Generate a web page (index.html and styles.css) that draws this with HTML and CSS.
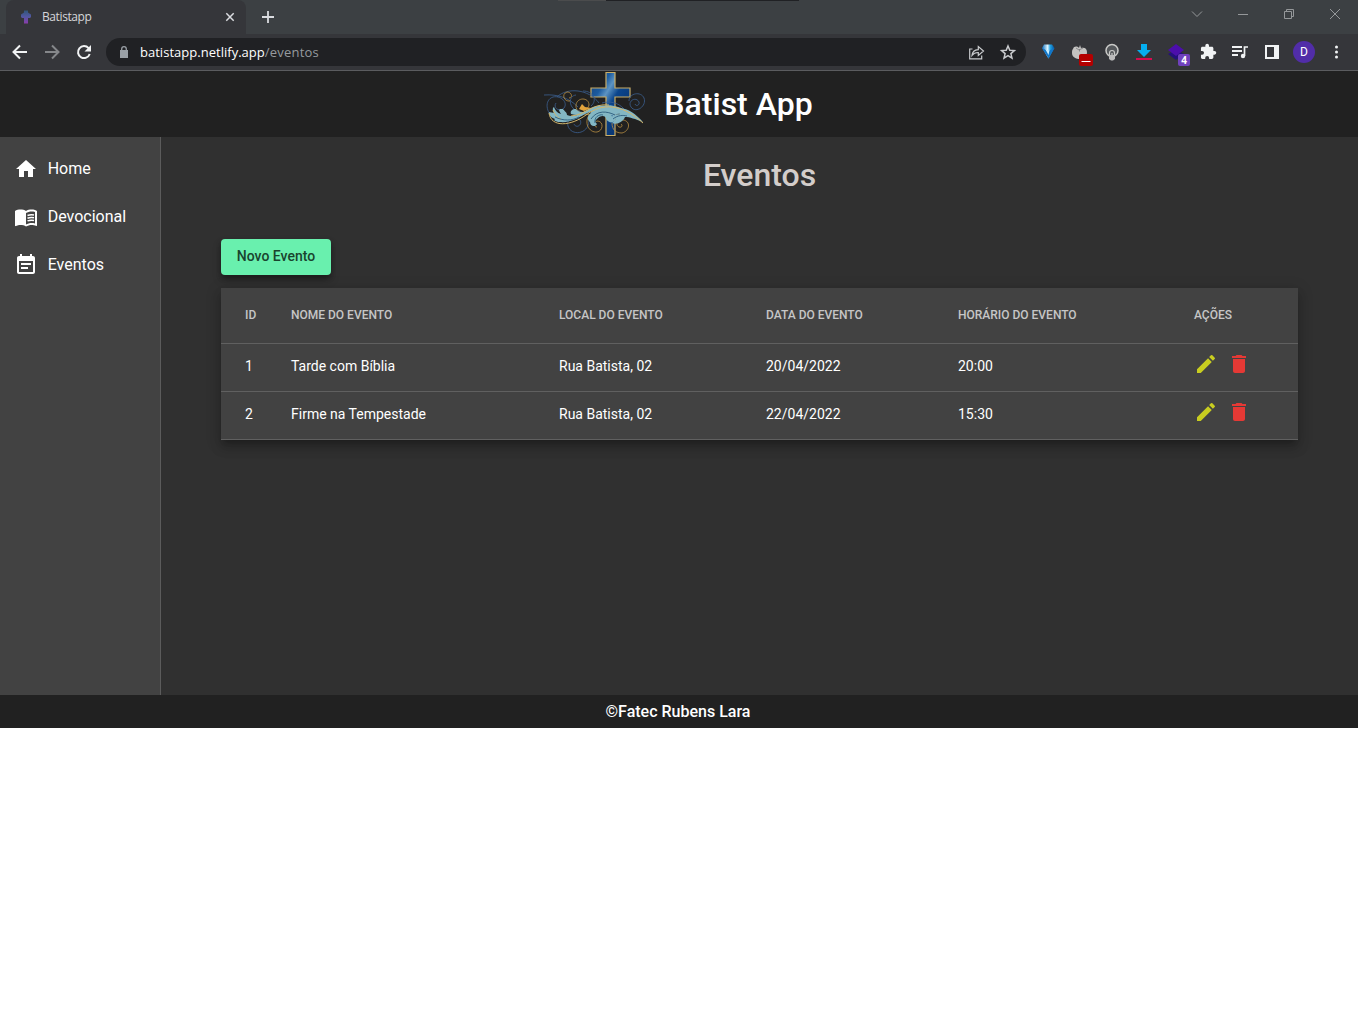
FILE: index.html
```html
<!DOCTYPE html>
<html lang="pt-BR">
<head>
<meta charset="utf-8">
<title>Batistapp</title>
<link rel="stylesheet" href="styles.css">
</head>
<body>
<svg class="sprite" width="0" height="0">
  <symbol id="edit" viewBox="0 0 24 24"><path d="M3 17.25V21h3.75L17.81 9.94l-3.75-3.75L3 17.25zM20.71 7.04a1 1 0 0 0 0-1.41l-2.34-2.34a1 1 0 0 0-1.41 0l-1.83 1.83 3.75 3.75 1.83-1.83z"/></symbol>
  <symbol id="trash" viewBox="0 0 24 24"><path d="M6 19c0 1.1.9 2 2 2h8c1.1 0 2-.9 2-2V7H6v12zM19 4h-3.5l-1-1h-5l-1 1H5v2h14V4z"/></symbol>
</svg>
<div class="tabstrip">
  <div class="tab">
    <svg class="favicon" width="12" height="14" viewBox="0 0 12 14"><defs><linearGradient id="fav" x2="0" y2="1"><stop stop-color="#315578"/><stop offset=".45" stop-color="#5058a0"/><stop offset="1" stop-color="#8b3dab"/></linearGradient></defs><path fill="url(#fav)" d="M4 .5h4v2l3 2v2.500l-1 1H8v5.500H4V8H2L1 7V4.500l3-2z"/></svg>
    <span class="tab-title">Batistapp</span>
    <svg class="tab-close" width="10" height="10" viewBox="0 0 10 10"><path d="m1.300 1.300 7.400 7.400M8.700 1.300 1.300 8.700"/></svg>
  </div>
  <svg class="new-tab" width="14" height="14" viewBox="0 0 14 14"><path d="M7 1v12M1 7h12"/></svg>
  <div class="window-controls">
    <svg width="46" height="20" viewBox="0 0 46 20"><path d="m18 7.500 5 5 5-5"/></svg>
    <svg width="46" height="20" viewBox="0 0 46 20"><path d="M18 10.500h10"/></svg>
    <svg width="46" height="20" viewBox="0 0 46 20"><path d="M18.500 7.500h7v7h-7zM20.500 7.500v-2h7v7h-2"/></svg>
    <svg width="46" height="20" viewBox="0 0 46 20"><path d="m18 5 10 10M28 5 18 15"/></svg>
  </div>
</div>
<div class="toolbar">
  <div class="nav">
    <svg width="32" height="20" viewBox="0 0 32 20"><path class="line" d="M23 10H10M16 3.500 9.500 10l6.500 6.500"/></svg>
    <svg class="dim" width="32" height="20" viewBox="0 0 32 20"><path class="line" d="M9 10h13M16 3.500l6.500 6.500-6.500 6.500"/></svg>
    <svg width="32" height="20" viewBox="0 0 32 20"><path class="line" d="M20.600 6.200A6 6 0 1 0 21.700 12"/><path d="M23 3v6.500h-6.500z" fill="#f1f3f4"/></svg>
  </div>
  <div class="omnibox">
    <svg width="8" height="12" viewBox="0 0 8 12"><path fill="#9aa0a6" d="M0 4h8v8H0z"/><path d="M1.700 5V3a2.300 2.300 0 0 1 4.600 0v2" fill="none" stroke="#9aa0a6" stroke-width="1.300"/></svg>
    <span class="host">batistapp.netlify.app</span><span class="path">/eventos</span>
    <div class="omni-actions">
      <svg width="32" height="20" viewBox="0 0 32 20"><path d="M12.500 7H9.700v9.800h12v-3.300M12 13.500c.3-3.700 3-5.700 6.300-5.900V4.500L23.500 9l-5.200 4.500v-3c-3-.1-4.800.9-6.300 3z"/></svg>
      <svg width="32" height="20" viewBox="0 0 32 20"><path stroke-width="1.500" d="m16 4 1.800 4.200 4.600.4-3.500 3 1.100 4.500-4-2.400-4 2.400 1.100-4.500-3.500-3 4.600-.4z"/></svg>
    </div>
  </div>
  <div class="extensions">
    <svg width="32" height="24" viewBox="0 0 32 24"><defs><linearGradient id="gem"><stop stop-color="#0969b9"/><stop offset=".45" stop-color="#dff6ff"/><stop offset=".65" stop-color="#22a5e7"/><stop offset="1" stop-color="#074e96"/></linearGradient></defs><path fill="url(#gem)" d="M12 4.500h8l2.500 3.500-6 10.500L10 8z"/><path fill="#1276c8" d="m10 8 6 3 6.500-3-6 10.500z"/><path fill="#c9efff" d="m13.500 9.500 2.500 1 1.500-.5-1 5z"/></svg>
    <svg width="32" height="24" viewBox="0 0 32 24"><path fill="#c4c3c1" d="M9 9c1-3 4-3 6-1l1-3 1 3c3-1 6 0 6 4 0 5-3 7-7 7s-8-2-8-6c0-2 0-3 1-4z"/><path stroke="#77797b" stroke-width=".8" d="m12 8 3 2 4-2M15.500 9v2.500" fill="none"/><rect x="15" y="14" width="14" height="12" rx="2" fill="#b40000"/><path stroke="#fff" d="M17.500 21.500h9"/></svg>
    <svg width="32" height="24" viewBox="0 0 32 24"><circle cx="16" cy="10.500" r="6" fill="#55585b" stroke="#c9c9c7" stroke-width="1.500"/><path d="M13.500 17v-4a2.500 2.500 0 1 1 5 0v4M16 13v5" fill="none" stroke="#c9c9c7" stroke-width="1.200"/><path fill="#bbb" d="M13 15h6v4l-2 1.500h-2L13 19z"/></svg>
    <svg width="32" height="24" viewBox="0 0 32 24"><path fill="#05aef0" d="M13 4h6v6h4l-7 7-7-7h4z"/><path fill="#d80b50" d="M8 18h16v2H8z"/></svg>
    <svg width="32" height="24" viewBox="0 0 32 24"><path fill="#24107b" d="M8 14l8-4 8 4-8 6z"/><path fill="#4c0eac" d="m8 10 8-6 8 6-8 6z"/><rect x="18" y="14" width="12" height="12" rx="2" fill="#7041bd"/><text x="24" y="24" class="badge">4</text></svg>
    <svg width="32" height="24" viewBox="0 0 32 24"><path fill="#f1f3f4" transform="translate(7.500 3) scale(.73)" d="M20.500 11H19V7c0-1.100-.9-2-2-2h-4V3.500a2.500 2.500 0 0 0-5 0V5H4c-1.100 0-2 .9-2 2v3.800h1.500a2.700 2.700 0 0 1 0 5.400H2V20c0 1.100.9 2 2 2h3.800v-1.500a2.700 2.700 0 0 1 5.400 0V22H17c1.100 0 2-.9 2-2v-4h1.500a2.500 2.500 0 0 0 0-5z"/></svg>
    <svg width="32" height="24" viewBox="0 0 32 24"><path d="M8 7h10M8 11h10M8 15h6" stroke="#f1f3f4" stroke-width="1.800"/><path d="M20.500 16V7H24" stroke="#f1f3f4" stroke-width="1.700" fill="none"/><circle cx="19" cy="16" r="2.200" fill="#f1f3f4"/></svg>
    <svg width="32" height="24" viewBox="0 0 32 24"><path fill="#f1f3f4" fill-rule="evenodd" d="M9 5h14v14H9zm2 2v10h7V7z"/></svg>
    <span class="avatar">D</span>
    <svg width="32" height="24" viewBox="0 0 32 24"><g fill="#f1f3f4"><circle cx="16.500" cy="7" r="1.500"/><circle cx="16.500" cy="12" r="1.500"/><circle cx="16.500" cy="17" r="1.500"/></g></svg>
  </div>
</div>
<header class="app-header">
  <svg class="logo" width="110" height="66" viewBox="-2 0 110 66">
    <defs><linearGradient id="cross" x2="1" y2="1"><stop stop-color="#173d70"/><stop offset=".25" stop-color="#1b5ba0"/><stop offset=".36" stop-color="#5d94c2"/><stop offset=".5" stop-color="#0b458c"/><stop offset="1" stop-color="#082b60"/></linearGradient></defs>
    <path d="M65.500 1.500h9V17h15v9h-15v38.500h-9V26h-15v-9h15z" transform="translate(-.5)" fill="url(#cross)" stroke="#c9ae69" stroke-width="1.200"/>
    <g fill="none" stroke-width=".8">
      <path stroke="#3b5f91" d="M3 24c14-1 25 3 34 12M13 47C5 42 3 29 12 26c9-2 16 7 10 12-5 3-10-2-7-6M16 26c10-10 32-8 42 6M61 32c7-2 16-1 22 6M88 30c0-8 12-10 15-3 3 8-8 16-13 9-4-6 5-11 8-5 1 3-3 5-4 2M48 50c-1 14-18 15-21 5-2-8 8-12 12-6 3 5-4 9-6 4M35 24c-9 1-7 16 4 16M42 20c10 0 15 9 8 15"/>
      <path stroke="#b98f43" d="M29 30c-6 1-9-7-3-9 5 0 6 6 2 6M53 43c-10 2-19-2-18-9 1-8 13-8 13 0-1 5-7 5-7 1M49 43c-7 8-1 19 7 18 6-1 7-10 1-11-4 0-5 6-1 6M71 52c0 7 4 10 10 10 8-2 9-12 1-13-6-1-8 5-4 7 3 1 4-2 2-3"/>
    </g>
    <g fill="#83b7c4">
      <path d="M13 36c-2 1-1 4 0 6l-5-1c0 4 3 6 6 7-2 1 1 3 5 3 10 1 18-4 25-8 7-3 12-5 20-8-10-1-17 3-23 7-6 3-11 4-15 2 0-3-3-4-4-6h-3c-2 1 0 3 1 5-4-1-6-4-7-7z"/>
      <path d="M49 43c4-8 17-11 28-7 7 2 10 5 12 9-9-4-17-2-19 0 5 0 7 3 2 6-2 1-5 0-7-3 0-4-6-4-9 0-3 2-1 4 0 5-1 3-7 3-7-2-3-2-3-6 0-8z"/>
      <path d="M74 38c10-3 20 4 28 13-8-3-13-5-18-5-2 5-8 8-13 6l4-4-4-3c2-3 6-1 8-2-1-2-3-4-5-5z"/>
      <path d="M30 43c-1-3 1-5 5-5 2 3 5 3 9 3-4 3-8 4-14 2z"/>
    </g>
    <g fill="none" stroke="#d2b56b" stroke-width="1"><path d="M8 42c2 15 22 13 37 2 16-12 35-12 57 8M12 39c2 5 5 8 8 9M30 45c15-1 21-13 38-11"/></g>
    <path d="m38 38 3-5 3 3 6 1-7 3z" fill="#e1a33d"/>
    <path d="M50 48c6-9 16-8 24-4M54 52c-1-6 4-9 8-8M72 48c5-4 10-4 14-3M14 46c8 4 17 4 24 0" fill="none" stroke="#215173" stroke-width=".8"/>
  </svg>
  <h1>Batist App</h1>
</header>
<div class="app-body">
  <nav class="sidebar">
    <a class="menu-item"><svg width="24" height="24" viewBox="0 0 24 24"><path d="M10 20v-6h4v6h5v-8h3L12 3 2 12h3v8z"/></svg><span>Home</span></a>
    <a class="menu-item"><svg width="24" height="24" viewBox="0 0 24 24"><path fill-rule="evenodd" d="M21 5c-1.110-.35-2.330-.5-3.500-.5-1.950 0-4.050.4-5.500 1.500-1.450-1.100-3.550-1.500-5.500-1.500S2.450 4.900 1 6v14.650c0 .25.25.5.5.5.1 0 .15-.05.250-.05C3.100 20.450 5.050 20 6.500 20c1.950 0 4.050.4 5.500 1.500 1.350-.85 3.800-1.500 5.500-1.500 1.650 0 3.350.3 4.750 1.050.1.050.15.050.25.050.25 0 .5-.25.5-.5V6c-.6-.45-1.250-.75-2-1zm0 13.500c-1.100-.35-2.300-.5-3.500-.5-1.700 0-4.150.65-5.500 1.500V8c1.350-.85 3.800-1.500 5.500-1.500 1.200 0 2.400.15 3.500.5z"/><path d="M13.500 10.500c2-.8 4.500-.9 6.500-.5M13.500 13.200c2-.8 4.500-.9 6.500-.5M13.500 15.900c2-.8 4.500-.9 6.500-.5" fill="none" stroke="#fff" stroke-width="1.500"/></svg><span>Devocional</span></a>
    <a class="menu-item"><svg width="24" height="24" viewBox="0 0 24 24"><path d="M17 10H7v2h10v-2zm2-7h-1V1h-2v2H8V1H6v2H5c-1.110 0-1.990.9-1.990 2L3 19c0 1.100.89 2 2 2h14c1.100 0 2-.9 2-2V5c0-1.100-.9-2-2-2zm0 16H5V8h14v11zm-5-5H7v2h7v-2z"/></svg><span>Eventos</span></a>
  </nav>
  <main class="content">
    <h2>Eventos</h2>
    <button class="new-event">Novo Evento</button>
    <table class="events">
      <colgroup><col class="c-id"><col class="c-name"><col class="c-place"><col class="c-date"><col class="c-time"><col></colgroup>
      <thead><tr><th>ID</th><th>NOME DO EVENTO</th><th>LOCAL DO EVENTO</th><th>DATA DO EVENTO</th><th>HORÁRIO DO EVENTO</th><th>AÇÕES</th></tr></thead>
      <tbody>
        <tr><td>1</td><td>Tarde com Bíblia</td><td>Rua Batista, 02</td><td>20/04/2022</td><td>20:00</td><td><div class="actions"><svg class="edit"><use href="#edit"/></svg><svg class="trash"><use href="#trash"/></svg></div></td></tr>
        <tr><td>2</td><td>Firme na Tempestade</td><td>Rua Batista, 02</td><td>22/04/2022</td><td>15:30</td><td><div class="actions"><svg class="edit"><use href="#edit"/></svg><svg class="trash"><use href="#trash"/></svg></div></td></tr>
      </tbody>
    </table>
  </main>
</div>
<footer class="app-footer">©Fatec Rubens Lara</footer>
</body>
</html>
```
FILE: styles.css
```css
* { box-sizing: border-box; }
body { margin: 0; background: #fff; color: #fff; font-family: Roboto, sans-serif; }
svg { display: block; flex: none; }
.sprite { position: absolute; }

.tabstrip { display: flex; height: 34px; background: linear-gradient(#202124, #202124) 606px 0 / 193px 1px no-repeat, linear-gradient(#4b4c4d, #4b4c4d) 558px 0 / 48px 1px no-repeat, #3c4043; }
.tab { display: flex; align-items: center; width: 240px; margin-left: 6px; padding: 0 11px 0 14px; background: #35363a; border-radius: 8px 8px 0 0; }
.tab-title { flex: 1; margin: -2px 0 0 10px; font: 12px "Open Sans", sans-serif; letter-spacing: -.4px; color: #d5d7da; }
.tab-close { stroke: #dadce0; stroke-width: 1.5; }
.new-tab { margin: 10px 0 0 15px; stroke: #dadce0; stroke-width: 1.8; }
.window-controls { display: flex; margin-left: auto; padding-top: 4px; }
.window-controls svg { fill: none; stroke: #95989a; stroke-width: 1; }

.toolbar { display: flex; align-items: center; height: 37px; padding: 0 6px 1px 4px; background: #35363a; border-bottom: 1px solid #5b5c5f; }
.nav { display: flex; }
.line { fill: none; stroke: #f1f3f4; stroke-width: 2; }
.dim .line { stroke: #85878a; }
.omnibox { display: flex; align-items: center; width: 920px; height: 28px; margin-left: 6px; padding: 0 2px 0 14px; border-radius: 14px; background: #202124; font: 13px "Open Sans", sans-serif; }
.host { margin-left: 12px; letter-spacing: .02px; }
.path { color: #969a9e; letter-spacing: .2px; }
.omni-actions { display: flex; margin-left: auto; }
.omni-actions svg { fill: none; stroke: #c9cbce; stroke-width: 1.2; }
.extensions { display: flex; margin-left: auto; }
.extensions svg { overflow: visible; }
.badge { fill: #fff; font: bold 10px "Open Sans", sans-serif; text-anchor: middle; }
.avatar { width: 22px; height: 22px; margin: 1px 5px; border-radius: 50%; background: #512da8; font-size: 12px; line-height: 22px; text-align: center; }

.app-header { display: flex; align-items: center; justify-content: center; height: 66px; padding-right: 6px; background: #212121; }
.app-header h1 { margin: 0 0 0 15px; font-size: 32px; font-weight: 500; line-height: 66px; }

.app-body { display: flex; height: 558px; background: #303030; }
.sidebar { width: 161px; padding-top: 8px; background: #424242; border-right: 1px solid #5b5b5b; }
.menu-item { display: flex; align-items: center; gap: 9.7px; height: 48px; padding-left: 14px; font-size: 16px; }
.menu-item span { padding-bottom: 2px; }
.menu-item svg { fill: #fff; }
.content { flex: 1; padding: 0 60px; }
.content h2 { margin: 18px 0 44px; font-size: 32px; line-height: 40px; font-weight: 500; text-align: center; color: #d3cdca; }
.new-event { display: block; width: 110px; height: 36px; margin: 0 0 13px; padding: 0 0 2px; border: 0; border-radius: 4px; background: #69f0ae; color: #19442e; font: 500 14px/33px Roboto, sans-serif; box-shadow: 0 3px 5px rgba(0,0,0,.3), 0 5px 10px rgba(0,0,0,.2); }
.events { width: 100%; table-layout: fixed; border-collapse: separate; border-spacing: 0; background: #424242; box-shadow: 0 5px 5px -3px rgba(0,0,0,.2), 0 8px 10px 1px rgba(0,0,0,.14), 0 3px 14px 2px rgba(0,0,0,.12); }
.c-id { width: 70px; }
.c-name { width: 268px; }
.c-place { width: 207px; }
.c-date { width: 192px; }
.c-time { width: 236px; }
th, td { padding: 0; border-bottom: 1px solid #606060; text-align: left; white-space: nowrap; }
th:first-child, td:first-child { padding-left: 24px; }
th { height: 56px; padding-bottom: 2px; font-size: 12px; font-weight: 500; color: #c6c6c6; }
td { height: 48px; padding-bottom: 4px; font-size: 14px; }
td:last-child { padding-bottom: 7px; }
.actions { display: flex; gap: 9px; }
.actions svg { width: 24px; height: 24px; }
.edit { fill: #c8cd20; }
.trash { fill: #e53935; }

.app-footer { height: 33px; padding-right: 2px; background: #212121; font-size: 16px; font-weight: 500; line-height: 33px; text-align: center; }
```
